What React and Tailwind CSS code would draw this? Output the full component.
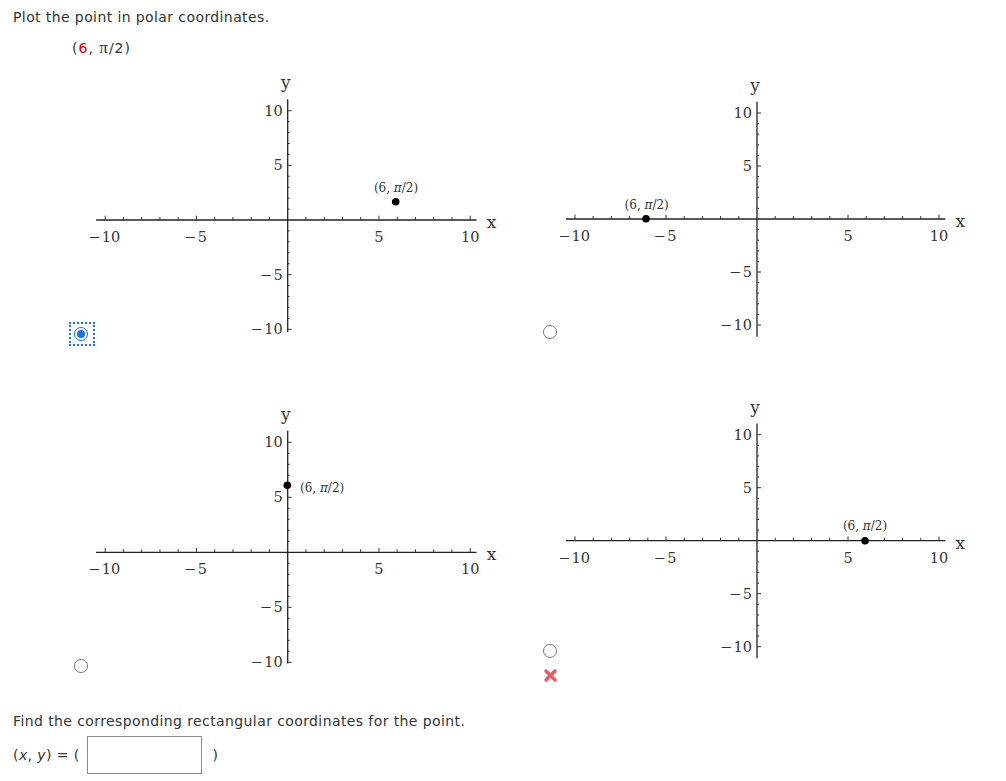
import React from "react";

const SERIF = '"DejaVu Serif", serif';

function Num({ v }) {
  if (v < 0) {
    return (
      <>
        <tspan>{"\u2212"}</tspan>
        <tspan dx="1.5">{Math.abs(v)}</tspan>
      </>
    );
  }
  return <tspan>{v}</tspan>;
}

function Graph({ w, h, ox, oy, sx, sy, yMin, point, label, labelSide }) {
  const xMin = -10.5;
  const xMax = 10.35;
  const yMax = 11.05;
  const X = (v) => ox + v * sx;
  const Y = (v) => oy - v * sy;
  const ticks = [];
  for (let i = -10; i <= 10; i++) {
    if (i === 0) continue;
    const major = i % 5 === 0;
    ticks.push(
      <line key={"x" + i} x1={X(i)} x2={X(i)} y1={oy} y2={oy - (major ? 4.3 : 3)} stroke="#333" strokeWidth="1" />
    );
    ticks.push(
      <line key={"y" + i} x1={ox} x2={ox + (major ? 4 : 2)} y1={Y(i)} y2={Y(i)} stroke="#333" strokeWidth="1" />
    );
  }
  const xl = [-10, -5, 5, 10];
  return (
    <svg width={w} height={h} viewBox={`0 0 ${w} ${h}`} className="block shrink-0">
      <line x1={X(xMin)} x2={X(xMax)} y1={oy} y2={oy} stroke="#222" strokeWidth="1.3" />
      <line x1={ox} x2={ox} y1={Y(yMax)} y2={Y(yMin)} stroke="#222" strokeWidth="1.3" />
      {ticks}
      {xl.map((v) => (
        <text key={"lx" + v} x={X(v) + (v < 0 ? -1 : 0)} y={oy + 17} textAnchor="middle" dominantBaseline="central" fontFamily={SERIF} fontSize="14.5" fill="#333">
          <Num v={v} />
        </text>
      ))}
      {xl.map((v) => (
        <text key={"ly" + v} x={ox - 5} y={Y(v)} textAnchor="end" dominantBaseline="central" fontFamily={SERIF} fontSize="14.5" fill="#333">
          <Num v={v} />
        </text>
      ))}
      <text x={ox - 2} y={Y(yMax) - 17} textAnchor="middle" dominantBaseline="central" fontFamily={SERIF} fontSize="17" fill="#333">y</text>
      <text x={X(xMax) + 15} y={oy + 2} textAnchor="middle" dominantBaseline="central" fontFamily={SERIF} fontSize="17" fill="#333">x</text>
      <circle cx={point[0]} cy={point[1]} r="3.8" fill="#000" />
      <text
        x={label[0]}
        y={label[1]}
        textAnchor={labelSide === "right" ? "start" : "middle"}
        dominantBaseline="central"
        fontFamily={SERIF}
        fontSize="12"
        fill="#333"
      >
        (6, <tspan fontStyle="italic">π</tspan>/2)
      </text>
    </svg>
  );
}

function Radio({ checked }) {
  if (checked) {
    return (
      <span className="inline-flex p-[3px] border-2 border-dotted border-[#1a73e8] -m-[5px]">
        <span className="w-[14px] h-[14px] rounded-full border-[1.5px] border-[#1a73e8] flex items-center justify-center bg-white">
          <span className="w-[8px] h-[8px] rounded-full bg-[#1a73e8]" />
        </span>
      </span>
    );
  }
  return <span className="block w-[14px] h-[14px] rounded-full border border-[#777] bg-white" />;
}

function XMark() {
  return (
    <svg width="15" height="15" viewBox="0 0 15 15" className="block">
      <line x1="3" y1="3" x2="12" y2="12" stroke="#f0585b" strokeWidth="3.4" strokeLinecap="round" />
      <line x1="12" y1="3" x2="3" y2="12" stroke="#f0585b" strokeWidth="3.4" strokeLinecap="round" />
    </svg>
  );
}

export default function App() {
  return (
    <div className="bg-white w-[1006px] h-[781px] overflow-hidden pt-[8px] pl-[13px] text-[14px] leading-[18px] tracking-[0.4px] text-[#333]" style={{ fontFamily: '"DejaVu Sans", Verdana, sans-serif' }}>
      <p>Plot the point in polar coordinates.</p>
      <p className="mt-[13px] pl-[59px] tracking-[1px]">
        (<span className="text-[#e00000]">6</span>, <span style={{ fontFamily: '"Liberation Serif", serif' }} className="text-[17px]">π</span>/2)
      </p>

      <div className="mt-[13px] ml-[47px] tracking-normal">
        <div className="flex h-[280px]">
          <div className="flex">
            <div className="w-[30px] flex flex-col justify-end pl-[14px] pb-[9px]">
              <Radio checked />
            </div>
            <Graph w={440} h={280} ox={197.7} oy={150} sx={18.25} sy={10.93} yMin={-10.25} point={[305.7, 131.7]} label={[306, 118]} />
          </div>
          <div className="flex">
            <div className="w-[30px] flex flex-col justify-end pl-[13px] pb-[11px]">
              <Radio />
            </div>
            <Graph w={440} h={280} ox={197} oy={149} sx={18.2} sy={10.6} yMin={-11.1} point={[86, 148.7]} label={[86.7, 135]} />
          </div>
        </div>

        <div className="flex h-[300px] mt-[45px]">
          <div className="flex">
            <div className="w-[30px] flex flex-col justify-end pl-[14px] pb-[22px]">
              <Radio />
            </div>
            <Graph w={440} h={300} ox={197.7} oy={157.3} sx={18.25} sy={11} yMin={-10.1} point={[197.3, 90.3]} label={[210, 92.7]} labelSide="right" />
          </div>
          <div className="flex">
            <div className="w-[30px] flex flex-col justify-end items-start pl-[13px] pb-[12px]">
              <Radio />
              <div className="mt-[10px] -ml-[0.5px]">
                <XMark />
              </div>
            </div>
            <Graph w={440} h={300} ox={197} oy={145.7} sx={18.2} sy={10.6} yMin={-11.1} point={[305, 145.7]} label={[305, 131]} />
          </div>
        </div>
      </div>

      <p className="mt-[17px]">Find the corresponding rectangular coordinates for the point.</p>
      <div className="flex items-center mt-[6px]">
        <span>
          (<i>x</i>, <i>y</i>) = (
        </span>
        <span className="ml-[7px] w-[115px] h-[38px] border border-[#8a8a8a] bg-white" />
        <span className="ml-[11px]">)</span>
      </div>
    </div>
  );
}
